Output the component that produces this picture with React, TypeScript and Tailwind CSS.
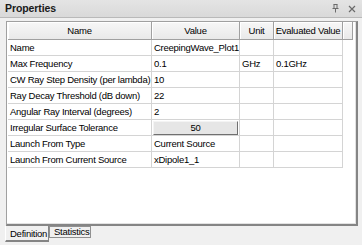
import React from 'react'

type Row = {
  name: string
  value: string
  unit?: string
  evaluated?: string
  button?: boolean
}

const rows: Row[] = [
  { name: 'Name', value: 'CreepingWave_Plot1' },
  { name: 'Max Frequency', value: '0.1', unit: 'GHz', evaluated: '0.1GHz' },
  { name: 'CW Ray Step Density (per lambda)', value: '10' },
  { name: 'Ray Decay Threshold (dB down)', value: '22' },
  { name: 'Angular Ray Interval (degrees)', value: '2' },
  { name: 'Irregular Surface Tolerance', value: '50', button: true },
  { name: 'Launch From Type', value: 'Current Source' },
  { name: 'Launch From Current Source', value: 'xDipole1_1' },
]

function PinIcon() {
  return (
    <svg width="7" height="9" viewBox="0 0 7 9" className="block">
      <path d="M1.5 0.5h4M2 0.5v4M5 0.5v4M0.5 4.5h6M3.5 4.5v4" stroke="#6a6a6a" strokeWidth="1" fill="none" />
    </svg>
  )
}

function CloseIcon() {
  return (
    <svg width="8" height="8" viewBox="0 0 8 8" className="block">
      <path d="M1 1L7 7M7 1L1 7" stroke="#6a6a6a" strokeWidth="1.2" />
    </svg>
  )
}

function HeaderCell({ label }: { label: string }) {
  return (
    <div className="flex items-center justify-center whitespace-nowrap overflow-hidden border-r border-b border-[#a0a0a0] bg-gradient-to-b from-[#f7f7f7] to-[#e9e9e9] shadow-[inset_1px_1px_0_#ffffff]">
      {label}
    </div>
  )
}

export default function App() {
  return (
    <div className="w-[362px] h-[245px] bg-[#f0f0f0] overflow-hidden flex flex-col text-[9.5px] tracking-[-0.25px] leading-none text-black font-['Liberation_Sans',Arial,sans-serif]">
      {/* title bar */}
      <div className="h-[18px] shrink-0 flex items-center justify-between pl-[5px] pr-[6px] bg-gradient-to-b from-[#e4e4e4] to-[#d9d9d9] border-b border-[#b9b9b9]">
        <span className="font-bold text-[10.5px] tracking-[-0.1px] text-[#1a1a1a]">Properties</span>
        <div className="flex items-center gap-[9px]">
          <PinIcon />
          <CloseIcon />
        </div>
      </div>

      {/* panel */}
      <div className="shrink-0 ml-[6px] mr-[4px] mt-[3px] h-[205px] border-l border-t border-[#a0a0a0] border-r-2 border-b-2 border-r-[#858585] border-b-[#858585] bg-white">
        <div className="h-full border-r border-b border-[#e2e2e2] pl-[1px]">
          <div className="grid grid-cols-[144px_88px_34px_69px_10px] h-[18px]">
            <HeaderCell label="Name" />
            <HeaderCell label="Value" />
            <HeaderCell label="Unit" />
            <HeaderCell label="Evaluated Value" />
            <HeaderCell label="" />
          </div>
          {rows.map(r => (
            <div key={r.name} className="grid grid-cols-[144px_88px_34px_69px] h-[16px]">
              <div className="flex items-center pl-[2px] border-r border-b border-[#d4d4d4] whitespace-nowrap overflow-hidden">
                {r.name}
              </div>
              <div className="flex items-center border-r border-b border-[#d4d4d4] whitespace-nowrap overflow-hidden">
                {r.button ? (
                  <div className="mx-[1px] h-[14px] w-full flex items-center justify-center bg-[#e6e6e6] border border-[#f4f4f4] border-r-[#707070] border-b-[#707070]">
                    {r.value}
                  </div>
                ) : (
                  <span className="pl-[2px]">{r.value}</span>
                )}
              </div>
              <div className="flex items-center pl-[2px] border-r border-b border-[#d4d4d4]">{r.unit}</div>
              <div className="flex items-center pl-[2px] border-r border-b border-[#d4d4d4]">{r.evaluated}</div>
            </div>
          ))}
        </div>
      </div>

      {/* tabs */}
      <div className="flex items-start pl-[5px]">
        <div className="h-[16px] w-[44px] flex items-center pl-[4px] pt-[2px] whitespace-nowrap bg-[#f0f0f0] border-l border-[#ffffff] border-r border-r-[#858585] border-b-2 border-b-[#858585]">
          Definition
        </div>
        <div className="h-[12px] w-[42px] flex items-center pl-[4px] whitespace-nowrap border border-[#909090] bg-[#f0f0f0]">
          Statistics
        </div>
      </div>
    </div>
  )
}
